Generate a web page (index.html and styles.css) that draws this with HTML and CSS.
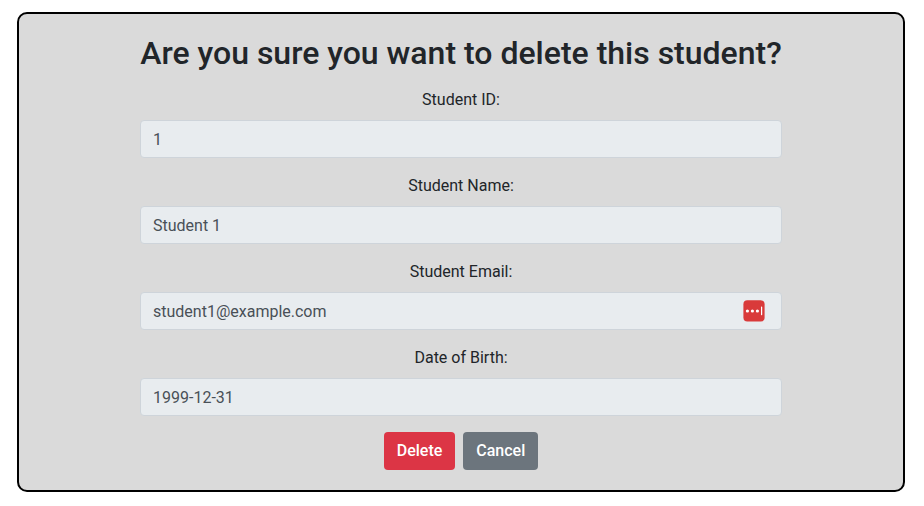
FILE: index.html
```html
<!DOCTYPE html>
<html lang="en">
<head>
<meta charset="utf-8">
<title>Delete student</title>
<link rel="stylesheet" href="styles.css">
</head>
<body>
<main class="panel">
  <form class="form">
    <h2 class="title">Are you sure you want to delete this student?</h2>
    <div class="group"><label class="label" for="sid">Student ID:</label><input class="control" id="sid" value="1" readonly></div>
    <div class="group"><label class="label" for="name">Student Name:</label><input class="control" id="name" value="Student 1" readonly></div>
    <div class="group"><label class="label" for="email">Student Email:</label>
      <div class="field"><input class="control" id="email" value="student1@example.com" readonly>
        <svg class="badge" width="22" height="22" viewBox="0 0 22 22" aria-hidden="true"><rect x=".4" y=".3" width="21.2" height="21.2" rx="4" fill="#d93a3a"/><g fill="#fff"><circle cx="4.4" cy="11" r="1.6"/><circle cx="9.4" cy="11" r="1.6"/><circle cx="14.4" cy="11" r="1.6"/><rect x="18" y="6.6" width="1.2" height="8.6" rx=".4"/></g></svg>
      </div></div>
    <div class="group"><label class="label" for="dob">Date of Birth:</label><input class="control" id="dob" value="1999-12-31" readonly></div>
    <div class="actions"><button class="btn btn-danger" type="button">Delete</button><button class="btn btn-secondary" type="button">Cancel</button></div>
  </form>
</main>
</body>
</html>
```
FILE: styles.css
```css
* { box-sizing: border-box; }
body { margin: 0; background: #fff; color: #212529; font: 400 16px/24px Roboto, sans-serif; overflow: hidden; }
.panel { width: 888px; height: 480px; margin: 12px 0 0 17px; padding: 20px 0 0; border: 2px solid #000; border-radius: 10px; background: #dadada; display: flex; justify-content: center; align-items: flex-start; }
.form { width: 642px; text-align: center; }
.title { margin: 0 0 16px; font-size: 32px; line-height: 38px; font-weight: 500; white-space: nowrap; }
.group { margin-bottom: 16px; }
.label { display: block; margin-bottom: 8px; }
.control { display: block; width: 100%; height: 38px; padding: 6px 12px; border: 1px solid #ced4da; border-radius: 4px; background: #e8ecef; color: #495057; font: inherit; outline: 0; }
.field { position: relative; }
.badge { position: absolute; right: 17px; top: 8px; }
.actions { display: flex; justify-content: center; gap: 8px; }
.btn { height: 38px; padding: 6px 12px; border: 1px solid transparent; border-radius: 4px; color: #fff; font: inherit; font-weight: 500; }
.btn-danger { background: #dc3545; }
.btn-secondary { background: #6c757d; }
```
